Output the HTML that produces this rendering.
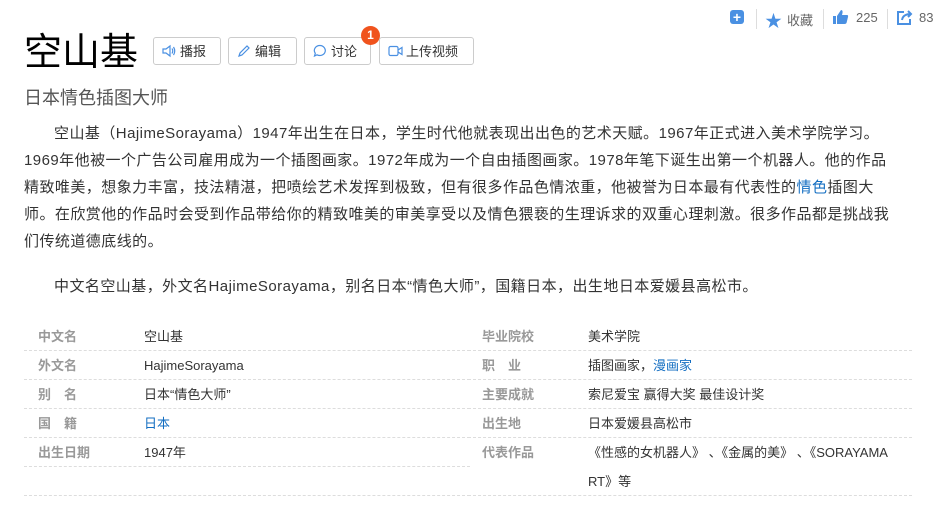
<!DOCTYPE html><html><head><meta charset="utf-8"><style>
body{margin:0;width:933px;height:513px;overflow:hidden;background:#fff;font-family:"Liberation Sans","Noto Sans CJK SC",sans-serif;color:#333;position:relative}
.abs{position:absolute}
h1{position:absolute;left:24px;top:28px;margin:0;font-size:38px;font-weight:normal;color:#000;line-height:50px}
.btn{position:absolute;top:37px;height:28px;border:1px solid #ccc;border-radius:3px;font-size:13px;color:#333;line-height:28px;box-sizing:border-box;padding-left:26px}
.btn svg{position:absolute;left:8px;top:6px}
.sub{left:24px;top:84px;font-size:18px;color:#555}
.p{position:absolute;left:24px;margin:0;font-size:15px;line-height:27px;color:#333;white-space:nowrap;letter-spacing:0.45px}
a{color:#136ec2;text-decoration:none}
.row{position:absolute;height:29px;border-bottom:1px dashed #ddd;font-size:13px;line-height:29px;box-sizing:border-box}
.k{position:absolute;left:14px;color:#999;font-weight:bold}
.v{position:absolute;left:120px;color:#333}
.top{top:10px;font-size:13px;color:#666}
</style></head><body>
<h1>空山基</h1>
<div class="btn" style="left:153px;width:68px"><svg width="14" height="14" viewBox="0 0 14 14" fill="none" stroke="#4a90e2" stroke-width="1.2"><path d="M1 5h3l4-3v10l-4-3H1z"/><path d="M10 4.5q1.5 2.5 0 5M11.5 3q2.5 4 0 8"/></svg>播报</div>
<div class="btn" style="left:228px;width:69px"><svg width="14" height="14" viewBox="0 0 14 14" fill="none" stroke="#4a90e2" stroke-width="1.2"><path d="M2 12l1-3 7-7 2 2-7 7z"/></svg>编辑</div>
<div class="btn" style="left:304px;width:67px"><svg width="14" height="14" viewBox="0 0 14 14" fill="none" stroke="#4a90e2" stroke-width="1.2"><path d="M7 1.5a5.5 5 0 1 1-3 9.3L1.5 12l.8-2.7A5.5 5 0 0 1 7 1.5z"/></svg>讨论</div>
<div class="abs" style="left:361px;top:26px;width:19px;height:19px;border-radius:50%;background:#f0531d;color:#fff;font-size:12px;font-weight:bold;text-align:center;line-height:19px">1</div>
<div class="btn" style="left:379px;width:95px"><svg width="16" height="14" viewBox="0 0 16 14" fill="none" stroke="#4a90e2" stroke-width="1.2"><rect x="1" y="2.5" width="9" height="9" rx="1.5"/><path d="M10 6l4-2.5v7L10 8"/></svg>上传视频</div>
<div class="abs sub">日本情色插图大师</div>
<div class="abs" style="left:730px;top:10px;width:14px;height:14px;background:#4a90e2;border-radius:3px;color:#fff;font-size:14px;font-weight:bold;line-height:14px;text-align:center">+</div>
<div class="abs" style="left:756px;top:9px;width:1px;height:20px;background:#ddd"></div>
<div class="abs top" style="left:765px;color:#4a90e2;font-size:17px;top:7px">★</div>
<div class="abs top" style="left:787px">收藏</div>
<div class="abs" style="left:823px;top:9px;width:1px;height:20px;background:#ddd"></div>
<svg class="abs" style="left:833px;top:9px" width="16" height="16" viewBox="0 0 16 16"><rect x="0" y="7" width="3" height="8" fill="#4a90e2"/><path d="M4 7l4-6q2 0 1.5 3L9 6h5q1.5 0 1 2l-1.5 6q-.5 1-2 1H4z" fill="#4a90e2"/></svg>
<div class="abs top" style="left:856px">225</div>
<div class="abs" style="left:887px;top:9px;width:1px;height:20px;background:#ddd"></div>
<svg class="abs" style="left:897px;top:10px" width="16" height="15" viewBox="0 0 16 15" fill="none" stroke="#4a90e2" stroke-width="2"><path d="M7 2H1v12h12v-5"/><path d="M5 10q1-6 9-6M11 1l3 3-3 3"/></svg>
<div class="abs top" style="left:919px">83</div>
<div class="p" style="top:120px;left:54px">空山基（HajimeSorayama）1947年出生在日本，学生时代他就表现出出色的艺术天赋。1967年正式进入美术学院学习。</div>
<div class="p" style="top:147px">1969年他被一个广告公司雇用成为一个插图画家。1972年成为一个自由插图画家。1978年笔下诞生出第一个机器人。他的作品</div>
<div class="p" style="top:174px">精致唯美，想象力丰富，技法精湛，把喷绘艺术发挥到极致，但有很多作品色情浓重，他被誉为日本最有代表性的<a>情色</a>插图大</div>
<div class="p" style="top:201px">师。在欣赏他的作品时会受到作品带给你的精致唯美的审美享受以及情色猥亵的生理诉求的双重心理刺激。很多作品都是挑战我</div>
<div class="p" style="top:228px">们传统道德底线的。</div>
<div class="p" style="top:273px;left:54px">中文名空山基，外文名HajimeSorayama，别名日本“情色大师”，国籍日本，出生地日本爱媛县高松市。</div>
<div class="row" style="left:24px;top:322px;width:446px"><span class="k">中文名</span><span class="v">空山基</span></div>
<div class="row" style="left:24px;top:351px;width:446px"><span class="k">外文名</span><span class="v">HajimeSorayama</span></div>
<div class="row" style="left:24px;top:380px;width:446px"><span class="k">别　名</span><span class="v">日本“情色大师”</span></div>
<div class="row" style="left:24px;top:409px;width:446px"><span class="k">国　籍</span><span class="v"><a>日本</a></span></div>
<div class="row" style="left:24px;top:438px;width:446px"><span class="k">出生日期</span><span class="v">1947年</span></div>
<div class="row" style="left:24px;top:467px;width:446px"></div>
<div class="row" style="left:468px;top:322px;width:444px"><span class="k">毕业院校</span><span class="v">美术学院</span></div>
<div class="row" style="left:468px;top:351px;width:444px"><span class="k">职　业</span><span class="v">插图画家，<a>漫画家</a></span></div>
<div class="row" style="left:468px;top:380px;width:444px"><span class="k">主要成就</span><span class="v">索尼爱宝 赢得大奖 最佳设计奖</span></div>
<div class="row" style="left:468px;top:409px;width:444px"><span class="k">出生地</span><span class="v">日本爱媛县高松市</span></div>
<div class="row" style="left:468px;top:438px;width:444px;height:58px"><span class="k">代表作品</span><span class="v" style="white-space:nowrap">《性感的女机器人》&nbsp;、《金属的美》&nbsp;、《SORAYAMA<br>RT》等</span></div>
</body></html>
